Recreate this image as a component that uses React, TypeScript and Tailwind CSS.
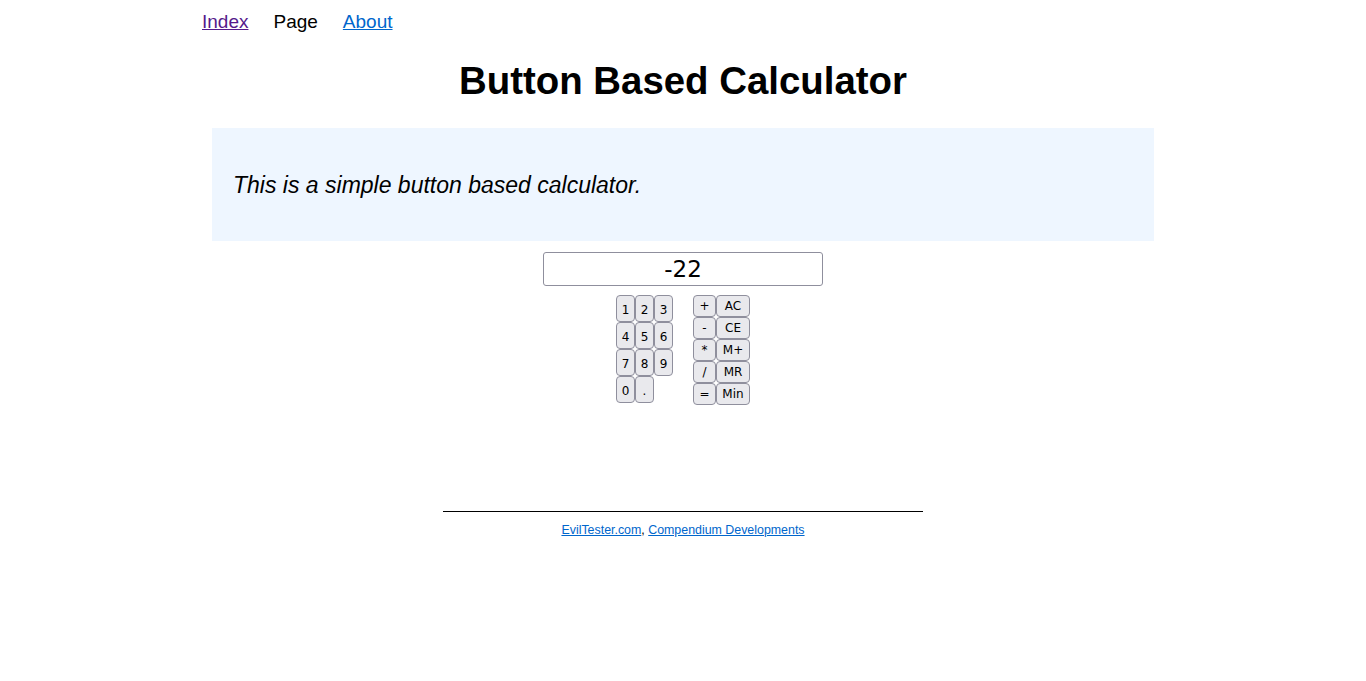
import React, { useState } from 'react';

const btn = 'bg-[#e9e9ed] border border-[#8f8f9d] rounded-[4px] text-[12px] text-black leading-none flex items-center justify-center';

const App: React.FC = () => {
    const [display, setDisplay] = useState('-22');

    const press = (k: string) => {
        if (k === 'AC' || k === 'CE') { setDisplay(''); return; }
        if (/^[0-9.]$/.test(k)) setDisplay(d => d + k);
    };

    const digits = [['1', '2', '3'], ['4', '5', '6'], ['7', '8', '9'], ['0', '.']];
    const ops = [['+', 'AC'], ['-', 'CE'], ['*', 'M+'], ['/', 'MR'], ['=', 'Min']];

    return (
        <div className="min-h-[681px] bg-white text-black font-['Liberation_Sans',Arial,sans-serif]">
            <div className="w-[962px] mx-auto">
                {/* Nav */}
                <div className="flex gap-[25px] pt-[10px] text-[19px] leading-[24px]">
                    <a href="#" className="text-[#551a8b] underline">Index</a>
                    <span>Page</span>
                    <a href="#" className="text-[#0066cc] underline">About</a>
                </div>

                <h1 className="text-center text-[38.4px] font-bold leading-[44px] mt-[25px]">Button Based Calculator</h1>

                <div className="mx-[10px] mt-[25px] h-[113px] bg-[#eef6ff] flex items-center px-[21px]">
                    <p className="italic text-[23px] leading-[28px]">This is a simple button based calculator.</p>
                </div>

                {/* Calculator */}
                <div className="flex flex-col items-center mt-[11px]">
                    <input
                        value={display}
                        onChange={e => setDisplay(e.target.value)}
                        className="w-[280px] h-[34px] border border-[#8f8f9d] rounded-[3px] text-center text-[23px] font-['DejaVu_Sans',sans-serif] outline-none"
                    />
                    <div className="flex gap-[20px] mt-[9px] font-['DejaVu_Sans',sans-serif]">
                        <div className="flex flex-col">
                            {digits.map((row, i) => (
                                <div key={i} className="flex">
                                    {row.map(k => (
                                        <button key={k} onClick={() => press(k)} className={`${btn} w-[19px] h-[27px] pt-[2px]`}>{k}</button>
                                    ))}
                                </div>
                            ))}
                        </div>
                        <div className="flex flex-col">
                            {ops.map(([a, b]) => (
                                <div key={a} className="flex">
                                    <button onClick={() => press(a)} className={`${btn} w-[23px] h-[22px] ${a === '=' ? 'bg-[#d0d0d7]' : ''}`}>{a}</button>
                                    <button onClick={() => press(b)} className={`${btn} w-[34px] h-[22px]`}>{b}</button>
                                </div>
                            ))}
                        </div>
                    </div>
                </div>

                {/* Footer */}
                <div className="w-[480px] mx-auto mt-[106px] border-t border-black pt-[10px] text-center text-[12.4px] leading-[16px]">
                    <a href="#" className="text-[#0066cc] underline">EvilTester.com</a>, <a href="#" className="text-[#0066cc] underline">Compendium Developments</a>
                </div>
            </div>
        </div>
    );
};

export default App;
